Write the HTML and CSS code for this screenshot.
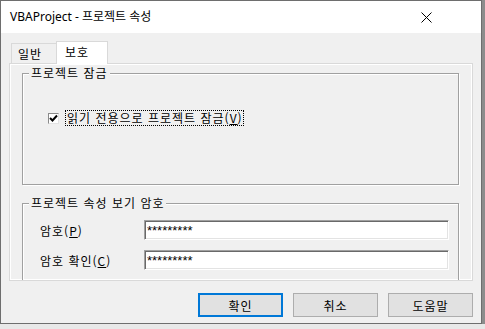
FILE: index.html
```html
<!DOCTYPE html>
<html lang="ko">
<head>
    <meta charset="UTF-8">
    <title>VBAProject - 프로젝트 속성</title>
    <link rel="stylesheet" href="styles.css">
</head>
<body>
    <div class="window">
        <div class="titlebar">
            <span class="title">VBAProject - 프로젝트 속성</span>
            <svg class="close" width="11" height="11" viewBox="0 0 11 11">
                <path d="M0.5 0.5 L10.5 10.5 M10.5 0.5 L0.5 10.5" stroke="#000" stroke-width="1" fill="none"/>
            </svg>
        </div>

        <div class="content">
            <div class="tabs">
                <div class="tab">일반</div>
                <div class="tab active">보호</div>
            </div>

            <div class="panel">
                <div class="group lock">
                    <div class="group-title">프로젝트 잠금</div>
                    <label class="check">
                        <span class="box">
                            <svg width="9" height="9" viewBox="0 0 9 9">
                                <path d="M1 4 L3.5 6.5 L8 1.5" stroke="#000" stroke-width="2" fill="none"/>
                            </svg>
                        </span>
                        <span class="focus">읽기 전용으로 프로젝트 잠금(<u>V</u>)</span>
                    </label>
                </div>

                <div class="group pass">
                    <div class="group-title">프로젝트 속성 보기 암호</div>
                    <div class="row">
                        <span class="lbl">암호(<u>P</u>)</span>
                        <input class="field" type="text" value="*********" readonly>
                    </div>
                    <div class="row">
                        <span class="lbl">암호 확인(<u>C</u>)</span>
                        <input class="field" type="text" value="*********" readonly>
                    </div>
                </div>
            </div>

            <div class="buttons">
                <button class="btn default">확인</button>
                <button class="btn">취소</button>
                <button class="btn">도움말</button>
            </div>
        </div>
    </div>
</body>
</html>
```

FILE: styles.css
```css
html, body{
    margin: 0;
    padding: 0;
}
body{
    background-color: #e8e8e8;
    font-family: "Noto Sans CJK KR", "Noto Sans", sans-serif;
    font-size: 12px;
    color: #000;
}
.window{
    width: 482px;
    height: 324px;
    box-sizing: border-box;
    border: 1px solid #6e6e6e;
    background-color: #f0f0f0;
    box-shadow: 3px 0 0 #8c8c8c;
    display: flex;
    flex-direction: column;
}
.titlebar{
    height: 32px;
    background-color: #fff;
    display: flex;
    align-items: center;
    justify-content: space-between;
    padding: 0 49px 0 9px;
}
.title{
    font-family: "Noto Sans", "Noto Sans CJK KR", sans-serif;
    font-size: 12px;
    line-height: 16px;
}
.close{
    display: block;
}
.content{
    flex: 1;
    padding: 8px 8px 0 8px;
    letter-spacing: 1px;
}
.tabs{
    display: flex;
    align-items: flex-end;
    padding-left: 2px;
    height: 22px;
}
.tab{
    height: 20px;
    box-sizing: border-box;
    border: 1px solid #d9d9d9;
    border-bottom: none;
    background-color: #f0f0f0;
    padding: 0 6px;
    width: 46px;
    line-height: 19px;
}
.tab.active{
    height: 23px;
    width: 52px;
    margin-bottom: -1px;
    margin-left: -1px;
    background-color: #fff;
    position: relative;
    z-index: 1;
    line-height: 20px;
    padding-left: 8px;
}
.panel{
    height: 218px;
    box-sizing: border-box;
    border: 1px solid #d9d9d9;
    box-shadow: inset 0 0 0 1px #fff;
    padding: 9px 13px 0 12px;
    overflow: hidden;
}
.group{
    border: 1px solid #a0a0a0;
    box-shadow: 1px 1px 0 #fff, inset 1px 1px 0 #fff;
    box-sizing: border-box;
}
.group-title{
    width: fit-content;
    margin: -9px 0 0 6px;
    padding: 0 2px;
    background-color: #f0f0f0;
    line-height: 16px;
}
.lock{
    height: 112px;
}
.check{
    display: flex;
    align-items: center;
    margin: 29px 0 0 25px;
}
.box{
    width: 11px;
    height: 11px;
    box-sizing: border-box;
    border: 1px solid #8a8a8a;
    border-right-color: #e3e3e3;
    border-bottom-color: #e3e3e3;
    background-color: #fff;
    display: flex;
    align-items: center;
    justify-content: center;
    margin-right: 6px;
}
.box svg{
    display: block;
}
.focus{
    border: 1px dotted #000;
    line-height: 14px;
    padding: 0 0 0 1px;
}
.pass{
    margin-top: 18px;
    height: 110px;
}
.row{
    display: flex;
    align-items: center;
    height: 20px;
    margin-top: 9px;
    padding-left: 17px;
}
.row + .row{
    margin-top: 10px;
}
.lbl{
    width: 104px;
}
.field{
    width: 305px;
    height: 20px;
    box-sizing: border-box;
    margin: 0;
    border: 1px solid #a0a0a0;
    border-right-color: #fff;
    border-bottom-color: #fff;
    box-shadow: inset 1px 1px 0 #696969, inset -1px -1px 0 #e3e3e3;
    background-color: #fff;
    padding: 0 2px;
    font-family: "Liberation Sans", sans-serif;
    font-size: 13px;
    letter-spacing: 0;
    outline: none;
}
.buttons{
    display: flex;
    justify-content: flex-end;
    gap: 10px;
    margin-top: 12px;
}
.btn{
    width: 85px;
    height: 24px;
    box-sizing: border-box;
    border: 1px solid #adadad;
    background-color: #e1e1e1;
    font-family: "Noto Sans CJK KR", sans-serif;
    font-size: 12px;
    letter-spacing: 1px;
    padding: 0;
    color: #000;
}
.btn.default{
    border: 2px solid #0078d7;
}
```
